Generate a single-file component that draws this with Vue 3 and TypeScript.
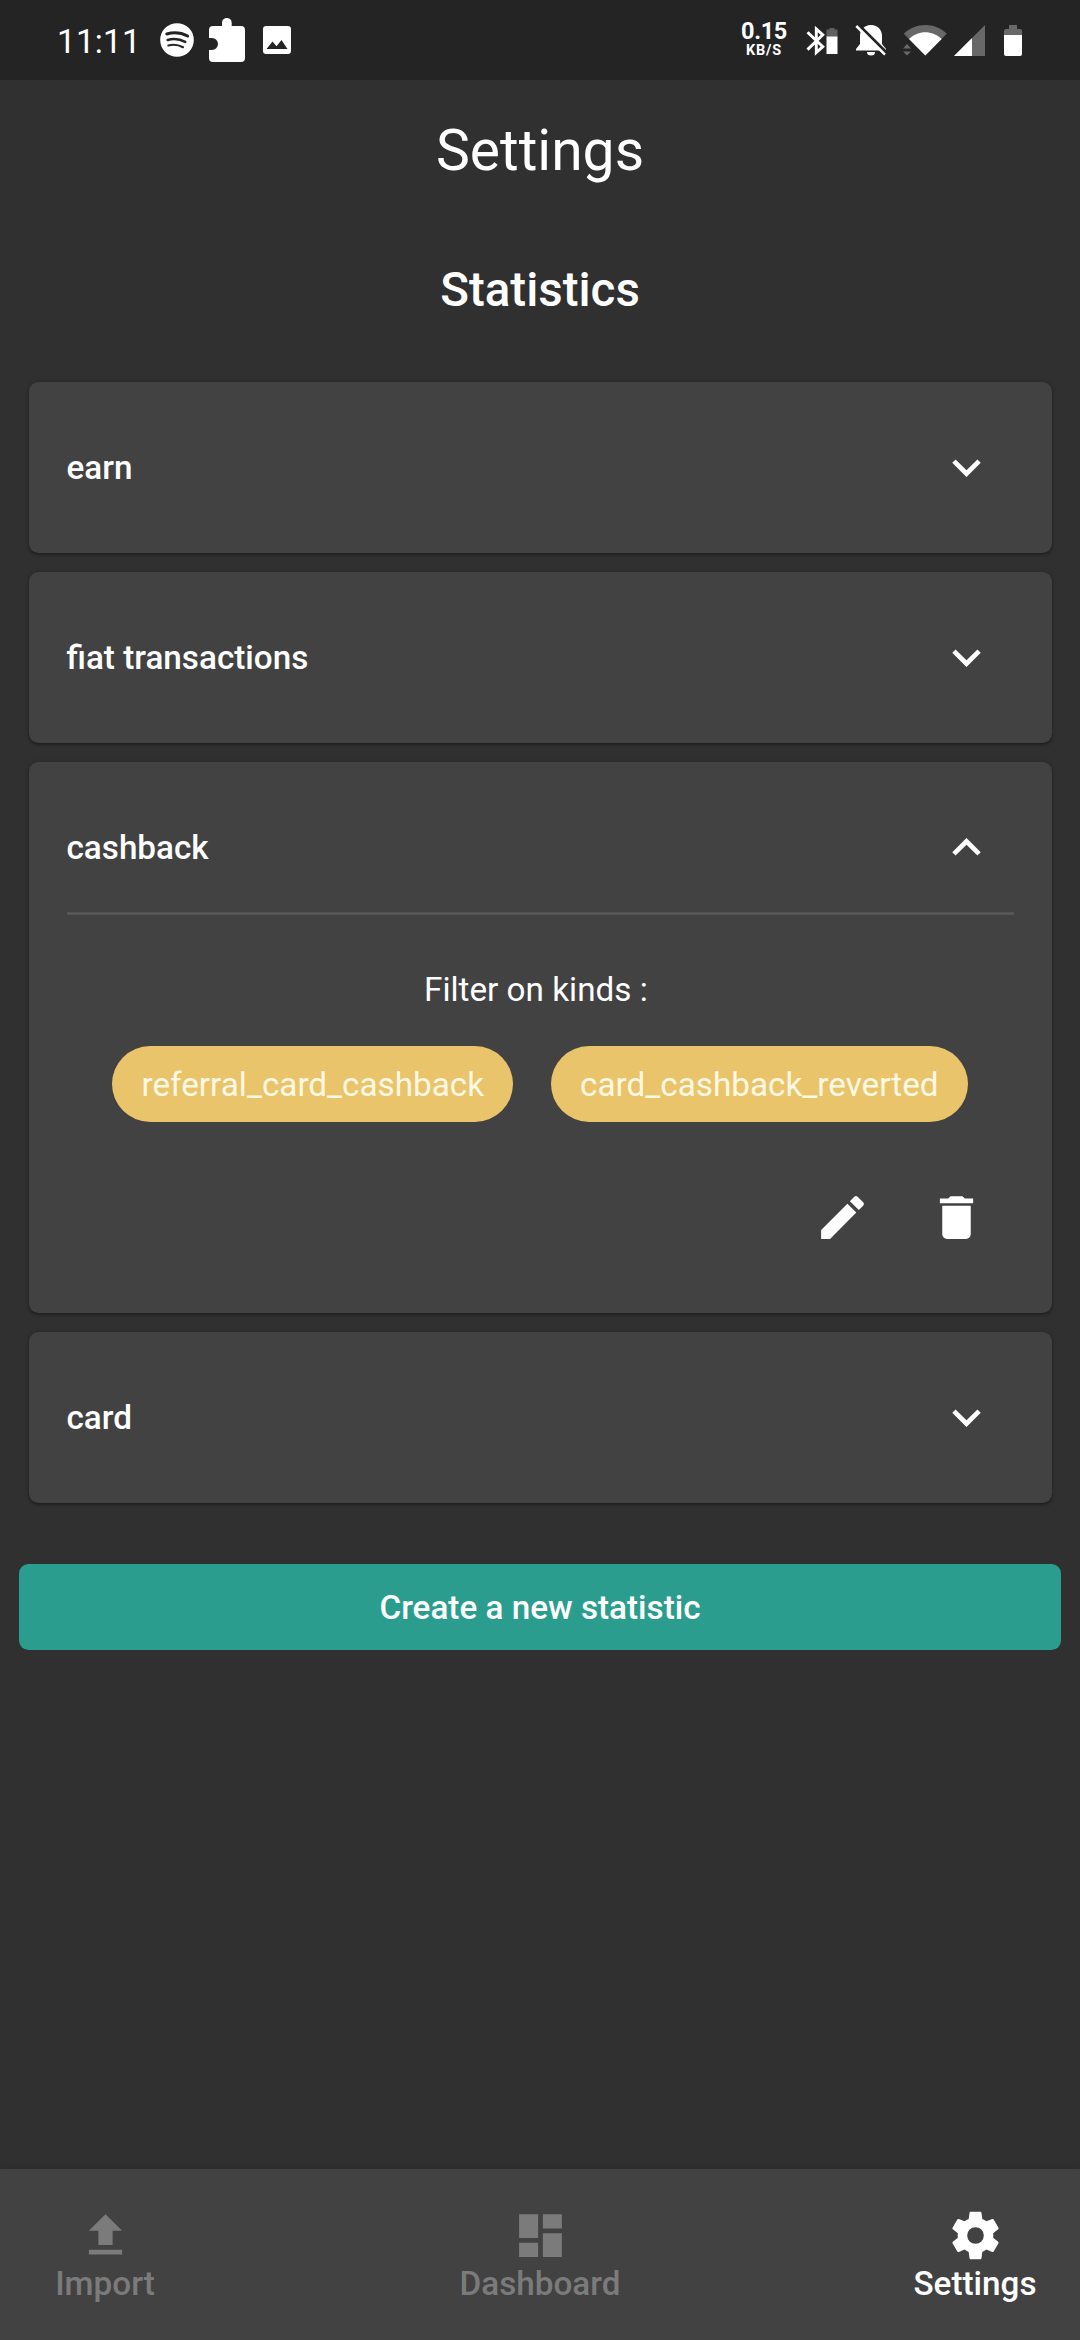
<script setup lang="ts">
interface Statistic {
  name: string
  open: boolean
  kinds: string[]
}

interface NavItem {
  label: string
  icon: string
  active: boolean
}

const statistics: Statistic[] = [
  { name: 'earn', open: false, kinds: [] },
  { name: 'fiat transactions', open: false, kinds: [] },
  { name: 'cashback', open: true, kinds: ['referral_card_cashback', 'card_cashback_reverted'] },
  { name: 'card', open: false, kinds: [] },
]

const icons = {
  chevronDown: 'M7.41 8.59 12 13.17l4.59-4.58L18 10l-6 6-6-6z',
  chevronUp: 'M7.41 15.41 12 10.83l4.59 4.58L18 14l-6-6-6 6z',
  pencil:
    'M20.71,7.04C21.1,6.65 21.1,6 20.71,5.63L18.37,3.29C18,2.9 17.35,2.9 16.96,3.29L15.12,5.12L18.87,8.87M3,17.25V21H6.75L17.81,9.93L14.06,6.18L3,17.25Z',
  trash:
    'M19,4H15.5L14.5,3H9.5L8.5,4H5V6H19M6,19A2,2 0 0,0 8,21H16A2,2 0 0,0 18,19V7H6V19Z',
  upload: 'M9,16V10H5L12,3L19,10H15V16H9M5,20V18H19V20H5Z',
  dashboard: 'M13,3V9H21V3M13,21H21V11H13M3,21H11V15H3M3,13H11V3H3V13Z',
  cog: 'M12,15.5A3.5,3.5 0 0,1 8.5,12A3.5,3.5 0 0,1 12,8.5A3.5,3.5 0 0,1 15.5,12A3.5,3.5 0 0,1 12,15.5M19.43,12.97C19.47,12.65 19.5,12.33 19.5,12C19.5,11.67 19.47,11.34 19.43,11L21.54,9.37C21.73,9.22 21.78,8.95 21.66,8.73L19.66,5.27C19.54,5.05 19.27,4.96 19.05,5.05L16.56,6.05C16.04,5.66 15.5,5.32 14.87,5.07L14.5,2.42C14.46,2.18 14.25,2 14,2H10C9.75,2 9.54,2.18 9.5,2.42L9.13,5.07C8.5,5.32 7.96,5.66 7.44,6.05L4.95,5.05C4.73,4.96 4.46,5.05 4.34,5.27L2.34,8.73C2.21,8.95 2.27,9.22 2.46,9.37L4.57,11C4.53,11.34 4.5,11.67 4.5,12C4.5,12.33 4.53,12.65 4.57,12.97L2.46,14.63C2.27,14.78 2.21,15.05 2.34,15.27L4.34,18.73C4.46,18.95 4.73,19.03 4.95,18.95L7.44,17.94C7.96,18.34 8.5,18.68 9.13,18.93L9.5,21.58C9.54,21.82 9.75,22 10,22H14C14.25,22 14.46,21.82 14.5,21.58L14.87,18.93C15.5,18.67 16.04,18.34 16.56,17.94L19.05,18.95C19.27,19.03 19.54,18.95 19.66,18.73L21.66,15.27C21.78,15.05 21.73,14.78 21.54,14.63L19.43,12.97Z',
}

const navItems: NavItem[] = [
  { label: 'Import', icon: icons.upload, active: false },
  { label: 'Dashboard', icon: icons.dashboard, active: false },
  { label: 'Settings', icon: icons.cog, active: true },
]
</script>

<template>
  <div class="screen">
    <div class="status-bar">
      <div class="status-left">
        <span class="clock">11:11</span>
        <!-- music -->
        <svg class="music" width="34" height="34" viewBox="0 0 34 34">
          <circle cx="17" cy="17" r="16.8" fill="#fff" />
          <g fill="none" stroke="#242424" stroke-linecap="round">
            <path d="M6.8 10.9c7-2 14.500-1.300 20.800 2.100" stroke-width="3.100" />
            <path d="M7.700 17c6-1.700 12-1 17.500 1.900" stroke-width="2.600" />
            <path d="M8.300 22.500c5.200-1.400 10-.8 14.700 1.700" stroke-width="2.100" />
          </g>
        </svg>
        <!-- extension -->
        <svg class="puzzle" width="36" height="44" viewBox="0 0 36 44">
          <path
            d="M4 8h9V4.500a4.800 4.500 0 0 1 9.700 0V8H32a4 4 0 0 1 4 4v28a4 4 0 0 1-4 4H4a4 4 0 0 1-4-4v-8h3a6 6 0 0 0 0-12H0v-8a4 4 0 0 1 4-4z"
            fill="#fff"
          />
        </svg>
        <!-- picture -->
        <svg class="picture" width="28" height="28" viewBox="0 0 28 28">
          <rect width="28" height="28" rx="3.200" fill="#fff" />
          <path d="M3.500 23l6-7.500 4 4.800 5-6.300 6 9z" fill="#242424" />
        </svg>
      </div>
      <div class="status-right">
        <div class="speed">
          <span class="speed-value">0.15</span>
          <span class="speed-unit">KB/S</span>
        </div>
        <!-- bluetooth with device battery -->
        <svg class="bluetooth" width="32" height="30" viewBox="0 0 32 30">
          <path
            d="M1.500 6.200 16.800 20.700 10.300 26.500V3L16.800 8.900 1.500 23.600"
            fill="none"
            stroke="#fff"
            stroke-width="2.900"
          />
          <path d="M20.500 11V3.500h3V2h5v1.500h3V11z" fill="#606060" />
          <path d="M20.500 10.500h11V28h-11z" fill="#fff" />
        </svg>
        <!-- muted bell -->
        <svg class="bell" width="32" height="32" viewBox="0 0 32 32">
          <path
            d="M16 1c7 0 11 5 11 11v8l4 5v1.500H1V25l4-5v-8C5 6 9 1 16 1z"
            fill="#fff"
          />
          <path d="M12 28h8a4 3.500 0 0 1-8 0z" fill="#fff" />
          <path d="M3.500.800 32 29.200" stroke="#242424" stroke-width="3" />
          <path d="M1.300 2 30 30.700" stroke="#fff" stroke-width="2.500" />
        </svg>
        <!-- wifi with traffic arrows -->
        <svg class="wifi" width="44" height="32" viewBox="0 0 44 32">
          <path d="M22.300 31.500.800 9.700C12-2 32.500-2 43.800 9.700z" fill="#686868" />
          <path d="M22.300 31.500 6 14.900c9-9 23.500-9 32.600 0z" fill="#fff" />
          <path d="M0 20.500h7.500v11H0z" fill="#242424" />
          <path d="M0 24.500 4 20l4 4.500zM0 27.500h8L4 31.500z" fill="#686868" />
        </svg>
        <!-- cell signal -->
        <svg class="signal" width="31" height="31" viewBox="0 0 31 31">
          <path d="M0 31 31 0v31z" fill="#686868" />
          <path d="M0 31 18 13v18z" fill="#fff" />
        </svg>
        <!-- battery -->
        <svg class="battery" width="18" height="31" viewBox="0 0 18 31">
          <path d="M0 10V6a2 2 0 0 1 2-2h3V0h8v4h3a2 2 0 0 1 2 2v4z" fill="#686868" />
          <path d="M0 10h18v19a2 2 0 0 1-2 2H2a2 2 0 0 1-2-2z" fill="#fff" />
        </svg>
      </div>
    </div>

    <main class="content">
      <h1 class="title">Settings</h1>
      <h2 class="subtitle">Statistics</h2>

      <div class="list">
        <section v-for="stat in statistics" :key="stat.name" class="card">
          <div class="card-header" :class="{ open: stat.open }">
            <span>{{ stat.name }}</span>
            <svg class="icon" viewBox="0 0 24 24">
              <path :d="stat.open ? icons.chevronUp : icons.chevronDown" />
            </svg>
          </div>
          <div v-if="stat.open" class="card-body">
            <div class="divider"></div>
            <p class="filter">Filter on kinds :&nbsp;</p>
            <div class="chips">
              <span v-for="kind in stat.kinds" :key="kind" class="chip">{{ kind }}</span>
            </div>
            <div class="actions">
              <svg class="icon" viewBox="0 0 24 24"><path :d="icons.pencil" /></svg>
              <svg class="icon" viewBox="0 0 24 24"><path :d="icons.trash" /></svg>
            </div>
          </div>
        </section>
      </div>

      <button class="create" type="button">Create a new statistic</button>
    </main>

    <nav class="bottom-nav">
      <div
        v-for="item in navItems"
        :key="item.label"
        class="nav-item"
        :class="{ active: item.active }"
      >
        <svg class="icon" viewBox="0 0 24 24"><path :d="item.icon" /></svg>
        <span>{{ item.label }}</span>
      </div>
    </nav>
  </div>
</template>

<style>
body {
  background: #303030;
}
</style>

<style scoped>
.screen {
  display: flex;
  flex-direction: column;
  width: 1080px;
  height: 2340px;
  overflow: hidden;
  background: #303030;
  color: #fff;
  font-family: Roboto, sans-serif;
  font-size: 33.25px;
  line-height: 1;
}

.status-bar {
  display: flex;
  justify-content: space-between;
  flex: none;
  height: 80px;
  background: #242424;
}

.status-left,
.status-right {
  display: flex;
  align-items: flex-start;
}

.status-left {
  padding-left: 57px;
}

.status-right {
  padding-right: 58px;
}

.status-bar svg {
  flex: none;
}

.clock {
  width: 103px;
  margin-top: 25px;
  font-size: 33.25px;
  line-height: 33px;
  letter-spacing: 0.2px;
}

.music {
  margin-top: 23px;
}

.puzzle {
  margin: 18px 0 0 15px;
}

.picture {
  margin: 26px 0 0 18px;
}

.speed {
  display: flex;
  flex-direction: column;
  align-items: center;
  width: 48px;
  margin: 19px 18px 0 0;
  font-weight: 700;
}

.speed-value {
  font-size: 23.5px;
  line-height: 24px;
  letter-spacing: -0.3px;
}

.speed-unit {
  font-size: 14.5px;
  line-height: 15px;
  letter-spacing: 0.8px;
}

.bluetooth {
  margin-top: 26px;
}

.bell {
  margin: 24px 0 0 17px;
}

.wifi {
  margin: 24px 0 0 16px;
}

.signal {
  margin: 25px 0 0 7px;
}

.battery {
  margin: 25px 0 0 19px;
}

.content {
  display: flex;
  flex-direction: column;
  flex: 1;
}

.title,
.subtitle {
  margin: 0;
  text-align: center;
}

.title {
  font-size: 57px;
  font-weight: 400;
  line-height: 141px;
}

.subtitle {
  font-size: 47.5px;
  font-weight: 500;
  line-height: 139px;
}

.list {
  display: flex;
  flex-direction: column;
  gap: 19px;
  padding: 22px 28.5px 0;
}

.card {
  border-radius: 9.5px;
  background: #424242;
  box-shadow:
    0 2px 3px rgba(0, 0, 0, 0.3),
    0 0 4px rgba(0, 0, 0, 0.15);
}

.card-header {
  display: flex;
  align-items: center;
  justify-content: space-between;
  height: 171px;
  padding: 0 57px 0 38px;
  font-weight: 500;
}

.card-header.open {
  height: 150px;
  padding-top: 21px;
  box-sizing: border-box;
}

.icon {
  flex: none;
  width: 57px;
  height: 57px;
  fill: currentColor;
}

.card-body {
  padding: 0 38px 67px;
}

.divider {
  height: 1px;
  border-top: 1px solid #525252;
  border-bottom: 1px solid #525252;
  background: #5a5a5a;
}

.filter {
  margin: 0;
  padding-top: 56px;
  line-height: 38px;
  text-align: center;
}

.chips {
  display: flex;
  justify-content: center;
  gap: 38px;
  margin-top: 37px;
}

.chip {
  height: 76px;
  padding: 0 29px;
  border-radius: 38px;
  background: #e9c46a;
  color: #fff8e3;
  line-height: 78px;
}

.actions {
  display: flex;
  justify-content: flex-end;
  gap: 57px;
  margin-top: 67px;
  padding-right: 28.5px;
}

.create {
  height: 86px;
  margin: 61px 19px 0;
  padding: 2px 0 0;
  border: 0;
  border-radius: 9.5px;
  background: #2a9d8f;
  color: #fff;
  font: 500 33.25px/84px Roboto, sans-serif;
}

.bottom-nav {
  display: flex;
  justify-content: space-between;
  flex: none;
  height: 171px;
  padding: 0 10px;
  box-sizing: border-box;
  background: #424242;
  box-shadow: 0 0 8px rgba(0, 0, 0, 0.12);
}

.nav-item {
  display: flex;
  flex-direction: column;
  align-items: center;
  width: 190px;
  padding-top: 38px;
  box-sizing: border-box;
  color: #7b7b7b;
  font-weight: 500;
}

.nav-item span {
  line-height: 40px;
}

.nav-item.active {
  color: #fff;
}
</style>
